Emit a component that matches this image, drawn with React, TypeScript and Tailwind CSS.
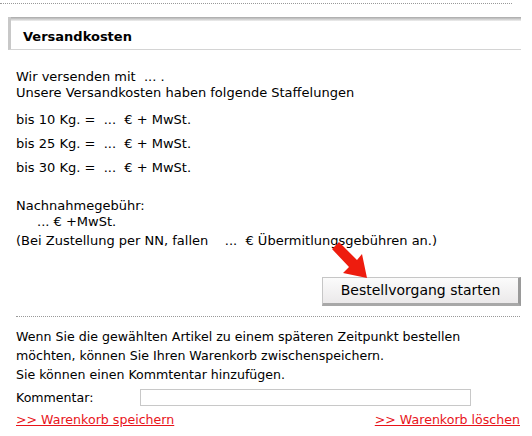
import React from 'react';

const font = { fontFamily: '"DejaVu Sans", Verdana, sans-serif' };

function Arrow() {
  return (
    <svg width="44" height="44" viewBox="0 0 44 44" className="absolute left-[328px] top-[238px]">
      <path d="M4 11 L11 4 L29 22 L34 16 L39 40 L15 35 L21 29 Z" fill="#ee1c0e" />
    </svg>
  );
}

export default function App() {
  return (
    <div className="relative w-[532px] h-[436px] bg-white text-[12.6px] text-black overflow-hidden" style={font}>
      <div className="mt-[3px] w-[512px] border-t border-dotted border-[#999]" />

      {/* section header */}
      <div className="ml-2 mt-[13px] w-[513px] h-[33px] bg-white border-l-[3px] border-l-[#c8c8c8] border-b border-b-[#d4d4d4] relative">
        <div className="absolute inset-x-0 top-0 h-[4px] bg-gradient-to-b from-[#a8a8a8] to-[#f0f0f0]" />
        <div className="pl-[12px] pt-[10px] font-bold text-[13px]">Versandkosten</div>
      </div>

      <div className="px-4 pt-[19px] leading-[16px] text-[13px]">
        <div>Wir versenden mit &nbsp;... .</div>
        <div>Unsere Versandkosten haben folgende Staffelungen</div>

        <div className="mt-[11px] flex flex-col gap-[8px]">
          <div>bis 10 Kg. = &nbsp;... &nbsp;€ + MwSt.</div>
          <div>bis 25 Kg. = &nbsp;... &nbsp;€ + MwSt.</div>
          <div>bis 30 Kg. = &nbsp;... &nbsp;€ + MwSt.</div>
        </div>

        <div className="mt-[22px]">Nachnahmegebühr:</div>
        <div className="pl-[21px]">... € +MwSt.</div>
        <div className="mt-[3px]">(Bei Zustellung per NN, fallen &nbsp;&nbsp;&nbsp;... &nbsp;€ Übermitlungsgebühren an.)</div>
      </div>

      <div className="flex justify-end pr-[11px] mt-[28px]">
        <button className="w-[199px] h-[29px] text-[14px] bg-gradient-to-b from-[#fbfbfb] to-[#ebe9ea] border border-[#c6c6c6] border-r-[3px] border-r-[#9a9a9a] border-b-[3px] border-b-[#a8a8a8]">
          Bestellvorgang starten
        </button>
      </div>

      <div className="ml-4 mr-[12px] mt-[10px] border-t border-dotted border-[#999]" />

      <div className="px-4 pt-[10px] leading-[19px]">
        <div>Wenn Sie die gewählten Artikel zu einem späteren Zeitpunkt bestellen</div>
        <div>möchten, können Sie Ihren Warenkorb zwischenspeichern.</div>
        <div>Sie können einen Kommtentar hinzufügen.</div>
        <div className="flex items-center mt-[4px]">
          <span className="w-[124px]">Kommentar:</span>
          <input className="w-[331px] h-[17px] border border-[#c8c8c8] outline-none" />
        </div>
        <div className="flex justify-between mt-[3px]">
          <a href="#" className="text-[#e8141a] underline">&gt;&gt; Warenkorb speichern</a>
          <a href="#" className="text-[#e8141a] underline mr-[-4px]">&gt;&gt; Warenkorb löschen</a>
        </div>
      </div>

      <Arrow />
    </div>
  );
}
